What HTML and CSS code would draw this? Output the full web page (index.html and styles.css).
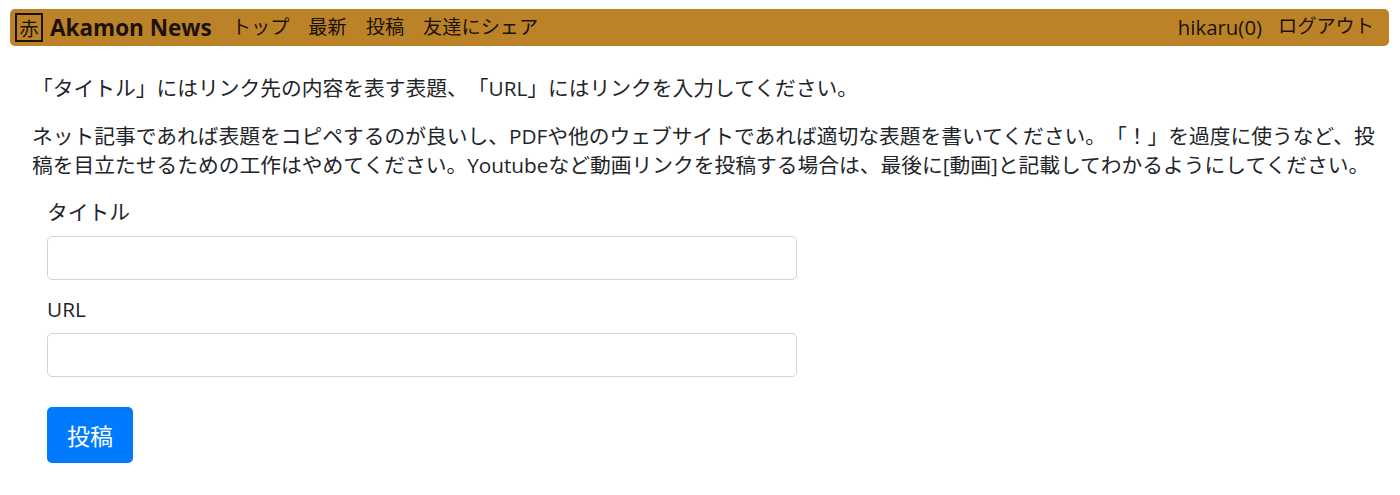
FILE: index.html
```html
<!DOCTYPE html>
<html lang="ja">
<head>
    <meta charset="UTF-8">
    <title>Akamon News</title>
    <link rel="stylesheet" href="styles.css">
</head>
<body>
    <nav class="navbar">
        <a href="#" class="brand">
            <span class="logo">赤</span>
            <span class="brand-name">Akamon News</span>
        </a>
        <a href="#" class="nav-link">トップ</a>
        <a href="#" class="nav-link">最新</a>
        <a href="#" class="nav-link">投稿</a>
        <a href="#" class="nav-link">友達にシェア</a>
        <div class="nav-right">
            <a href="#" class="nav-link user">hikaru(0)</a>
            <a href="#" class="nav-link">ログアウト</a>
        </div>
    </nav>
    <div class="container">
        <p class="lead">「タイトル」にはリンク先の内容を表す表題、「URL」にはリンクを入力してください。</p>
        <p class="note">ネット記事であれば表題をコピペするのが良いし、PDFや他のウェブサイトであれば適切な表題を書いてください。「！」を過度に使うなど、投稿を目立たせるための工作はやめてください。Youtubeなど動画リンクを投稿する場合は、最後に[動画]と記載してわかるようにしてください。</p>
        <form class="post-form">
            <label for="title">タイトル</label>
            <input type="text" id="title">
            <label for="url">URL</label>
            <input type="text" id="url">
            <button type="button">投稿</button>
        </form>
    </div>
</body>
</html>
```

FILE: styles.css
```css
body {
    font-family: 'Open Sans', 'Noto Sans CJK JP', sans-serif;
    font-size: 20.75px;
    line-height: 1.4;
    color: #212529;
    background: #fff;
    margin: 0;
    padding: 9px 11px 0 10px;
    text-spacing-trim: space-all;
}
.navbar {
    display: flex;
    align-items: center;
    height: 37px;
    padding: 0 5px;
    background: #bc8227;
    border-radius: 5px;
    font-size: 19.2px;
}
.navbar a {
    color: #1a1208;
    text-decoration: none;
}
.brand {
    display: flex;
    align-items: center;
    margin-right: 20px;
}
.logo {
    width: 28px;
    height: 29px;
    box-sizing: border-box;
    border: 2px solid #1a1208;
    margin-right: 7px;
    font-family: 'Noto Sans CJK JP', serif;
    font-size: 19px;
    line-height: 25px;
    text-align: center;
}
.brand-name {
    font-size: 22.5px;
    font-weight: 700;
}
.nav-link {
    margin-right: 19px;
}
.nav-right {
    display: flex;
    margin-left: auto;
}
.nav-right .nav-link {
    margin-right: 10px;
    margin-left: 6px;
}
.nav-right .user {
    font-size: 20.4px;
}
.container {
    padding: 0 10px 0 22px;
}
.lead {
    margin: 28px 0 19px;
    line-height: 29px;
}
.note {
    margin: 0 0 18px;
    line-height: 29px;
}
.post-form {
    padding-left: 15px;
    width: 750px;
}
label {
    display: block;
    height: 29px;
    margin-bottom: 9px;
}
input[type="text"] {
    display: block;
    width: 100%;
    height: 44px;
    box-sizing: border-box;
    border: 1px solid #ced4da;
    border-radius: 5px;
    background: #fff;
    margin-bottom: 15px;
}
input#url {
    margin-bottom: 0;
}
button {
    display: block;
    width: 86px;
    height: 56px;
    margin-top: 30px;
    background: #007bff;
    color: #fff;
    border: none;
    border-radius: 5px;
    font-family: inherit;
    font-size: 23px;
}
```
